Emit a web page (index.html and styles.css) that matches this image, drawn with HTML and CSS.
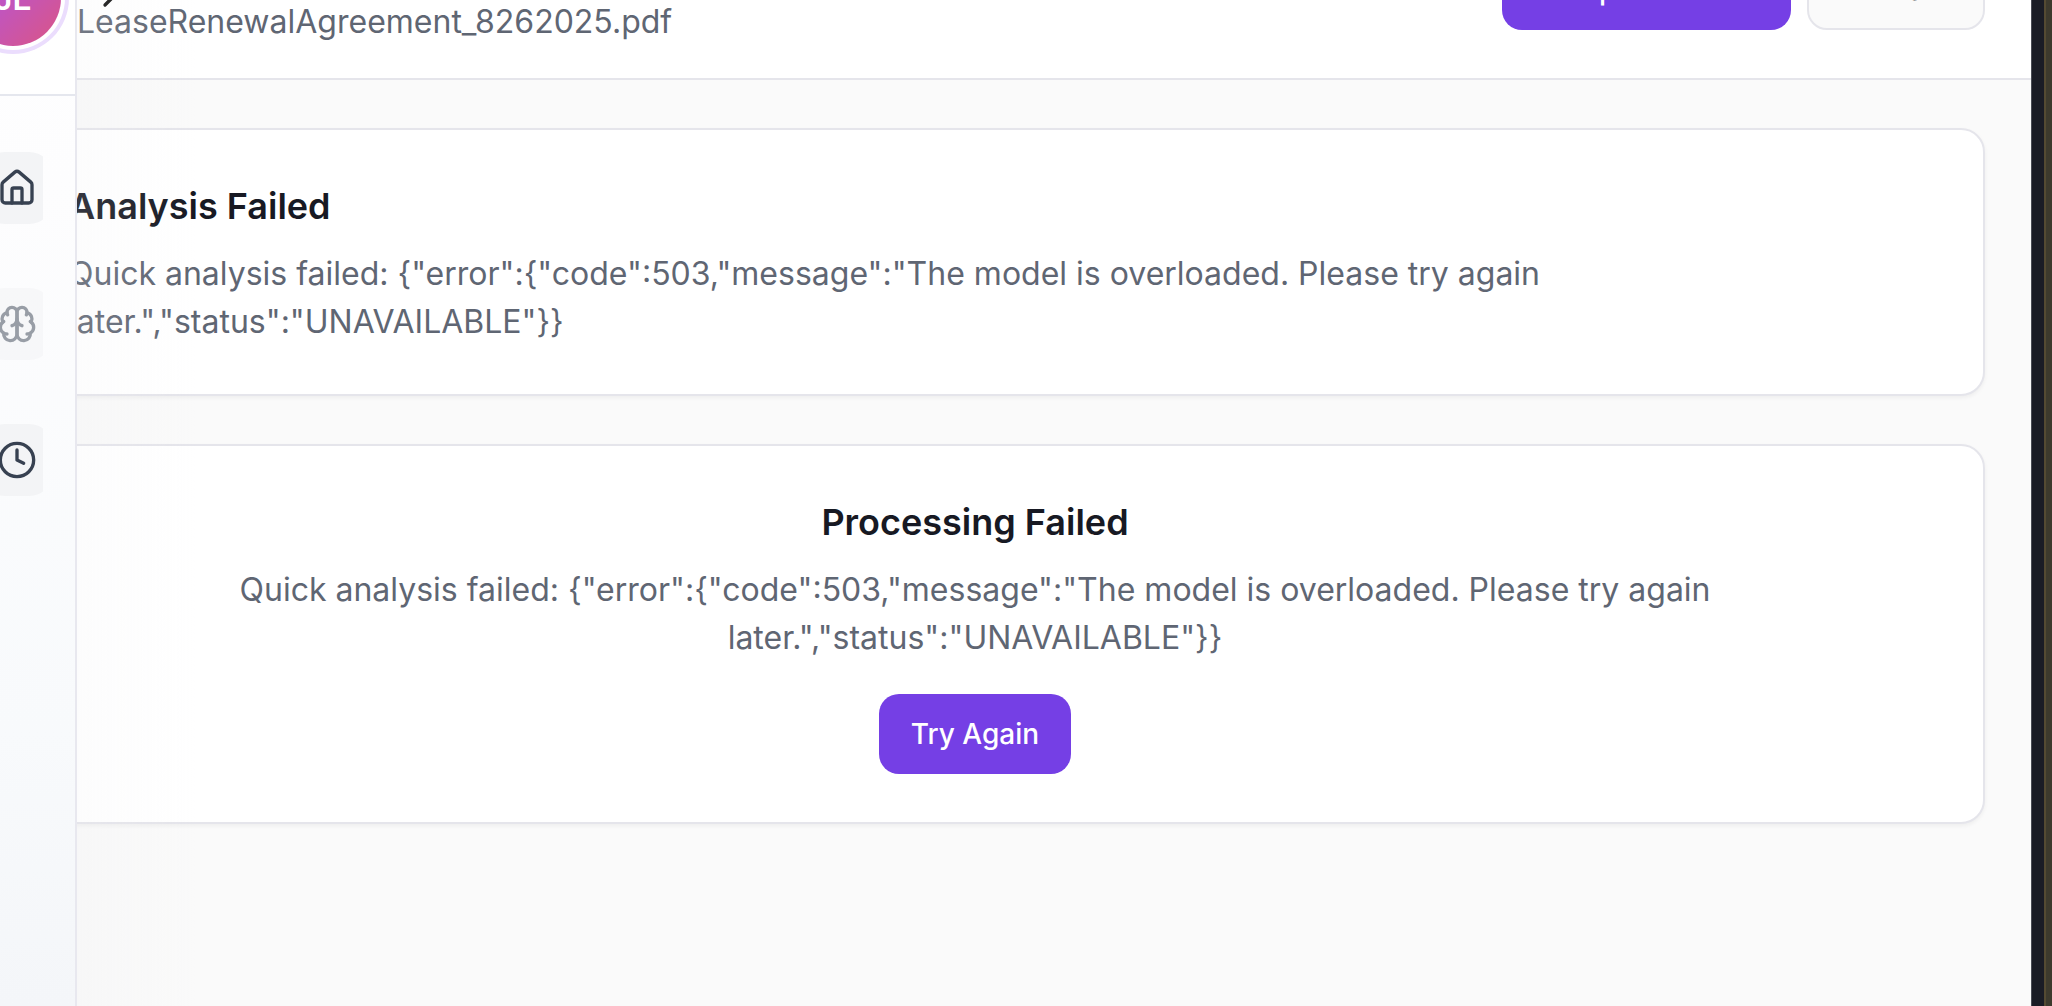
FILE: index.html
```html
<!DOCTYPE html>
<html lang="en">
<head>
<meta charset="utf-8">
<meta name="viewport" content="width=device-width, initial-scale=1">
<title>Lease Renewal Agreement</title>
<link rel="stylesheet" href="styles.css">
</head>
<body>
<div class="app">
  <aside class="sidebar">
    <div class="profile"><div class="avatar">JE</div></div>
    <nav class="nav">
      <button class="nav-button" type="button" aria-label="Home">
        <svg class="icon" viewBox="0 0 24 24"><path d="M15 21v-8a1 1 0 0 0-1-1h-4a1 1 0 0 0-1 1v8"/><path d="M3 10a2 2 0 0 1 .709-1.528l7-5.999a2 2 0 0 1 2.582 0l7 5.999A2 2 0 0 1 21 10v9a2 2 0 0 1-2 2H5a2 2 0 0 1-2-2z"/></svg>
      </button>
      <button class="nav-button" type="button" aria-label="Analysis" disabled>
        <svg class="icon" viewBox="0 0 24 24"><path d="M12 5a3 3 0 1 0-5.997.125 4 4 0 0 0-2.526 5.77 4 4 0 0 0 .556 6.588A4 4 0 1 0 12 18Z"/><path d="M12 5a3 3 0 1 1 5.997.125 4 4 0 0 1 2.526 5.77 4 4 0 0 1-.556 6.588A4 4 0 1 1 12 18Z"/><path d="M15 13a4.5 4.5 0 0 1-3-4 4.5 4.5 0 0 1-3 4"/><path d="M17.599 6.5a3 3 0 0 0 .399-1.375"/><path d="M6.003 5.125A3 3 0 0 0 6.401 6.5"/><path d="M3.477 10.896a4 4 0 0 1 .585-.396"/><path d="M19.938 10.5a4 4 0 0 1 .585.396"/><path d="M6 18a4 4 0 0 1-1.967-.516"/><path d="M19.967 17.484A4 4 0 0 1 18 18"/></svg>
      </button>
      <button class="nav-button" type="button" aria-label="History">
        <svg class="icon" viewBox="0 0 24 24"><circle cx="12" cy="12" r="10"/><path d="M12 6v6l4 2"/></svg>
      </button>
    </nav>
    <button class="expand" type="button" aria-label="Expand sidebar">
      <svg class="icon" viewBox="0 0 24 24"><path d="m9 18 6-6-6-6"/></svg>
    </button>
  </aside>

  <main class="page">
    <header class="page-header">
      <div class="document">
        <p class="text">LeaseRenewalAgreement_8262025.pdf</p>
      </div>
      <div class="actions">
        <button class="button button-primary button-export" type="button">
          <svg class="icon icon-small" viewBox="0 0 24 24"><path d="M21 15v4a2 2 0 0 1-2 2H5a2 2 0 0 1-2-2v-4"/><path d="m7 10 5 5 5-5"/><path d="M12 15V3"/></svg>
          Export Results
        </button>
        <button class="button button-outline" type="button">
          <svg class="icon icon-small" viewBox="0 0 24 24"><path d="M5 12v6a2 2 0 0 0 2 2h10a2 2 0 0 0 2-2v-6"/><path d="m16 6-4-4-4 4"/><path d="M12 2v13"/></svg>
          Share
        </button>
      </div>
    </header>

    <div class="content">
      <section class="card card-alert">
        <div class="alert-icon"></div>
        <div class="message">
          <h2 class="title">Analysis Failed</h2>
          <p class="text">Quick analysis failed: {"error":{"code":503,"message":"The model is overloaded. Please try again later.","status":"UNAVAILABLE"}}</p>
        </div>
      </section>

      <section class="card card-centered">
        <div class="message">
          <h2 class="title">Processing Failed</h2>
          <p class="text">Quick analysis failed: {"error":{"code":503,"message":"The model is overloaded. Please try again later.","status":"UNAVAILABLE"}}</p>
        </div>
        <button class="button button-primary" type="button">Try Again</button>
      </section>
    </div>
  </main>
  <div class="window-edge"></div>
</div>
</body>
</html>
```
FILE: styles.css
```css
* {
  box-sizing: border-box;
}

body {
  margin: 0;
  height: 100vh;
  overflow: hidden;
  background: #fafafa;
  color: #171923;
  font-family: Inter, "Liberation Sans", sans-serif;
}

.app {
  display: flex;
  height: 100vh;
}

/* Sidebar, floating above the page */
.sidebar {
  position: fixed;
  z-index: 2;
  top: -98px;
  bottom: 0;
  left: -43px;
  width: 120px;
  border-right: 2px solid #e8e8ef;
  background: linear-gradient(#ffffff, #fdfdfe 25%, #f8fafc 75%, #f4f6f9);
}

.sidebar::after {
  content: "";
  position: absolute;
  top: 0;
  bottom: 0;
  left: 120px;
  width: 120px;
  background: linear-gradient(90deg, rgba(236, 236, 239, 0.14), rgba(236, 236, 239, 0));
  pointer-events: none;
}

.profile {
  padding: 48px 8px;
  border-bottom: 2px solid #e5e7ee;
  background: #ffffff;
}

.avatar {
  display: flex;
  align-items: center;
  justify-content: center;
  width: 96px;
  height: 96px;
  border-radius: 50%;
  background: linear-gradient(135deg, #a855f7, #db5583);
  box-shadow: 0 0 0 4px #ffffff, 0 0 0 8px #ebddfd;
  color: #ffffff;
  font-size: 32px;
  font-weight: 600;
}

.nav {
  display: flex;
  flex-direction: column;
  gap: 64px;
  margin-right: 32px;
  padding: 56px 0 56px 24px;
  overflow: hidden;
}

.nav-button {
  display: flex;
  flex: none;
  align-items: center;
  justify-content: center;
  width: 72px;
  height: 72px;
  padding: 0;
  border: 0;
  border-radius: 24px;
  background: #f3f4f6;
  color: #374151;
}

.nav-button:disabled {
  opacity: 0.5;
}

.expand {
  position: absolute;
  top: 73px;
  left: 133px;
  padding: 0;
  border: 0;
  background: none;
  color: #111111;
}

.icon {
  display: block;
  flex: none;
  width: 40px;
  height: 40px;
  fill: none;
  stroke: currentColor;
  stroke-width: 2;
  stroke-linecap: round;
  stroke-linejoin: round;
}

.icon-small {
  width: 24px;
  height: 24px;
}

/* Page */
.page {
  flex: 1;
  margin: -98px 0 0 -83px;
}

.page-header {
  display: flex;
  align-items: center;
  justify-content: space-between;
  padding: 32px 46px 32px 160px;
  border-bottom: 2px solid #e5e5eb;
  background: #ffffff;
}

.document {
  padding-top: 64px;
}

.actions {
  display: flex;
  gap: 16px;
}

.content {
  display: flex;
  flex-direction: column;
  gap: 48px;
  padding: 48px 46px 48px 48px;
}

.card {
  display: flex;
  padding: 48px;
  border: 2px solid #e5e5eb;
  border-radius: 24px;
  background: #ffffff;
  box-shadow: 0 2px 4px rgba(0, 0, 0, 0.05);
}

.card-alert {
  gap: 14px;
}

.alert-icon {
  flex: none;
  width: 40px;
}

.card-centered {
  flex-direction: column;
  align-items: center;
  gap: 32px;
  text-align: center;
}

.message {
  display: flex;
  flex-direction: column;
  gap: 16px;
}

.title {
  margin: 0;
  font-size: 36px;
  font-weight: 600;
  line-height: 56px;
}

.text {
  margin: 0;
  color: #5f6673;
  font-size: 32px;
  line-height: 48px;
}

.button {
  display: flex;
  align-items: center;
  justify-content: center;
  gap: 8px;
  height: 80px;
  padding: 0 32px;
  border: 0;
  border-radius: 20px;
  font-family: inherit;
  font-size: 28px;
  font-weight: 500;
}

.button-primary {
  background: #753fe5;
  color: #ffffff;
}

.button-outline {
  border: 2px solid #e5e5eb;
  background: #fafafa;
  color: #171923;
}

/* Dark frame to the right of the page */
.window-edge {
  flex: none;
  width: 21px;
  border-left: 1px solid #4a4c55;
  background: linear-gradient(90deg, #1a1c25 12px, #544a32 12px, #544a32 14px, #3d3a2d 14px);
}
```
